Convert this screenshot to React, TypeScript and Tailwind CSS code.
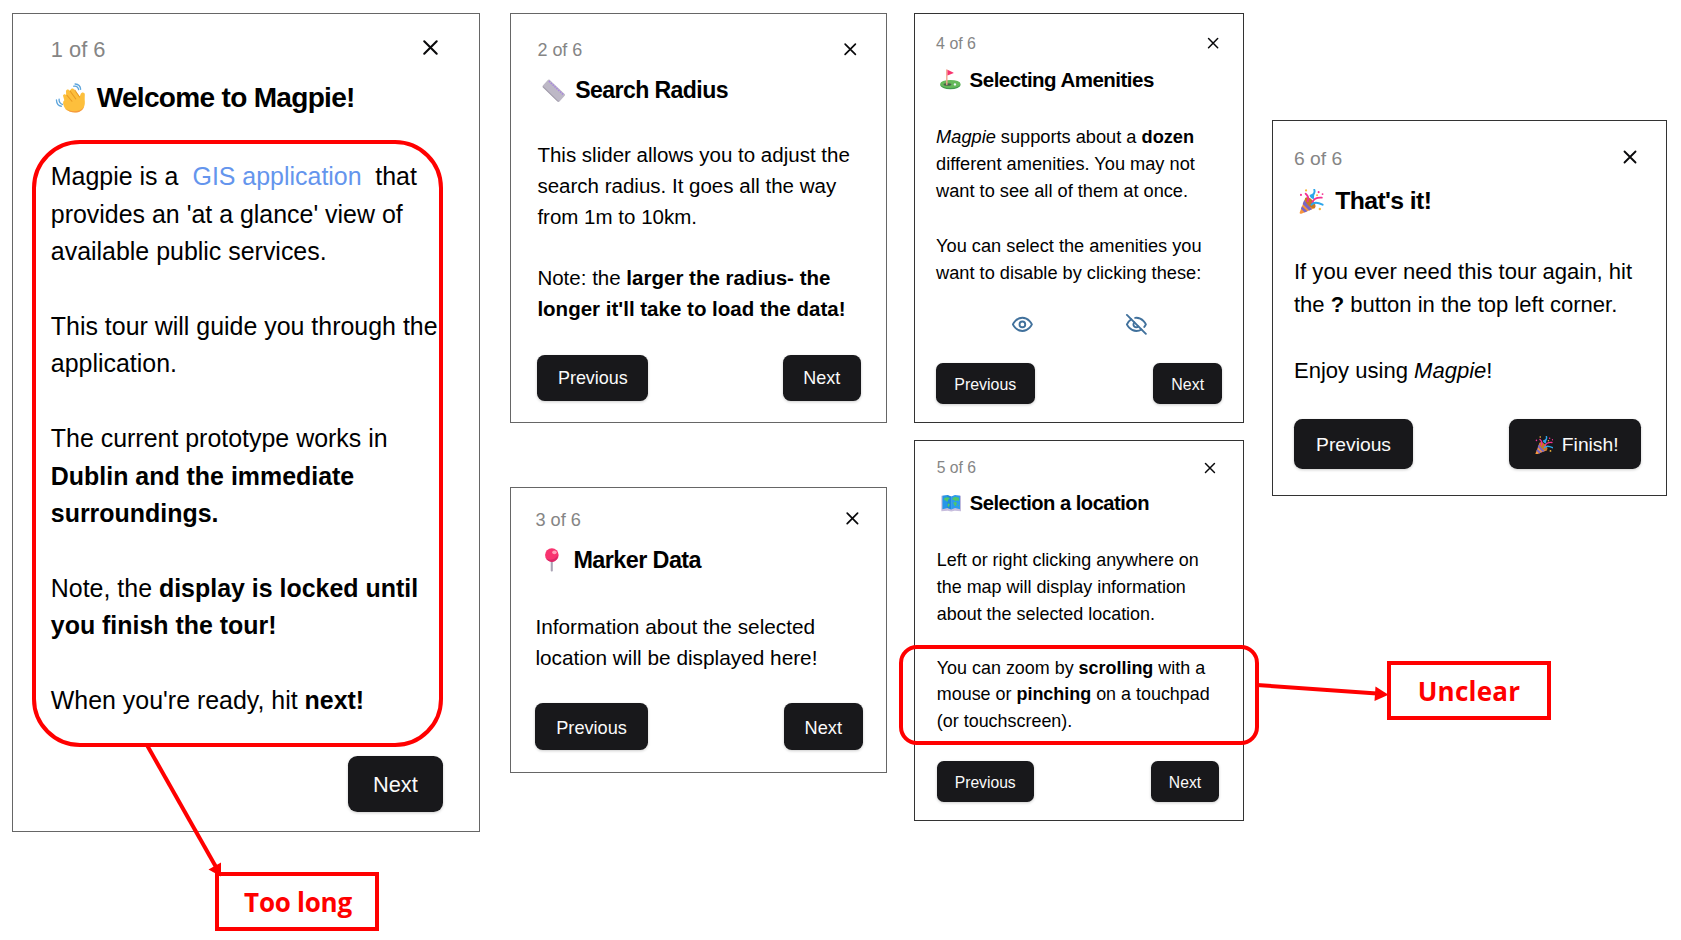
import React from "react";

function CloseIcon() {
  return (
    <svg className="mt-[-0.12em] mr-[-0.015em] size-[1em]" viewBox="0 0 24 24" fill="none" stroke="#09090b" strokeWidth="2" strokeLinecap="round">
      <path d="M18 6 6 18M6 6l12 12" />
    </svg>
  );
}

function Wave() {
  return (
    <svg className="size-full overflow-visible" viewBox="0 0 32 32" fill="none">
      <g transform="translate(-1.300 -1) scale(1.180 1.050)">
        <path d="M10.200 27.500C8 24.500 7 20 9 18.300L7.800 13.500c.2-2 2.400-2.200 3-.4l-.2-4.300c.2-2.300 2.700-2.500 3.300-.5l1-.9c.4-2.200 3-2.300 3.500-.2l5.400 7.200.8-2.700c.7-2.500 4.200-2.200 4 .7-.1 2.300-.2 4.500 0 7.500.4 6.500-3.500 11-9 11.300-4 .2-7.500-1-10-3.700Z" fill="#FDBF3C" />
        <path d="m11.500 13 4.800 6.500M14.500 8.500l5.500 8.500M19 7.500l4.500 7.500" stroke="#E99A22" strokeWidth="1" strokeLinecap="round" />
        <path d="M10.500 27c4 4 13 5 17.500-2-1.500 4.500-5 6.700-8.700 6.500-4 0-7-1.500-8.800-4.500Z" fill="#F59A3E" />
      </g>
      <path d="M20 2.500c3-.5 4.800 1.200 5.500 3.900M21.500 0c3.800.2 6 2.500 6.200 6M3.500 17c-.3 3 1.200 5 3.700 6M.5 18c.2 4 2 6.500 5.500 7" stroke="#5DA5DC" strokeWidth="1.500" strokeLinecap="round" />
    </svg>
  );
}

function Ruler() {
  return (
    <svg className="size-full" viewBox="0 0 32 32" fill="none">
      <path d="M1.500 8.500 8 1.500c.8-.9 1.800-1 2.700-.1L31 20.500c.8.8.8 1.700 0 2.500l-7 7.700c-.8.8-1.800.8-2.600 0L1.500 11.500c-.9-.9-.9-2 0-3Z" fill="#BDB8C6" />
      <path d="m1.500 9.500 20.300 19.800c.8.8 1.400.6 2 0l-.6 1.200c-.8.8-1.600.8-2.400 0L1.300 11.700c-.8-.8-.4-1.500.2-2.200Z" fill="#A5A0AE" />
      <path d="m9.500 2.800 20 18.800" stroke="#A986DF" strokeWidth="2.200" strokeDasharray="2 1.500" />
    </svg>
  );
}

function Pin() {
  return (
    <svg className="size-full" viewBox="0 0 32 32" fill="none">
      <path d="M14.500 17h2.800v13.300c0 1.700-2.800 1.700-2.800 0Z" fill="#A9A3B5" />
      <circle cx="16" cy="9.500" r="9.200" fill="#F8336F" />
      <path d="M8 14c4 3.500 12 2.500 16-4.200.3 5.200-3.500 9-8 9-3.500 0-6.500-1.800-8-4.800Z" fill="#DA2868" />
      <ellipse cx="19.500" cy="5.800" rx="3" ry="2.500" fill="#FF9FB8" />
    </svg>
  );
}

function Golf() {
  return (
    <svg className="size-full" viewBox="0 0 32 32" fill="none">
      <ellipse cx="16" cy="24.800" rx="15.700" ry="6.500" fill="#419A4D" />
      <ellipse cx="16" cy="23" rx="15.700" ry="6.200" fill="#65B95A" />
      <ellipse cx="11.500" cy="23.800" rx="6" ry="2" fill="#4A614A" />
      <circle cx="23" cy="23.800" r="1.800" fill="#EEF5F7" />
      <path d="M10.500 1.500v22.500" stroke="#EFA68D" strokeWidth="2.200" strokeLinecap="round" />
      <path d="m11.500 1 8.800 4.300c.8.400.8 1 0 1.400L11.500 10Z" fill="#F8336F" />
    </svg>
  );
}

function WorldMap() {
  return (
    <svg className="size-full" viewBox="0 0 32 32" fill="none">
      <path d="m.5 4.500 10-.5L16 5.500 21 4l10.500.5V28.500l-10-.7-5.500 1-5.500-1-10 .7Z" fill="#C7BDDD" />
      <path d="M2.200 4.500 10 3l6 2.500V26l-6-2.500-7.800 1.800Z" fill="#2596E8" />
      <path d="M16 5.500 22 3l7.800 1.500v20.800L22 23.500 16 26Z" fill="#2C9BEF" />
      <path d="M10 3l6 2.500V26l-6-2.500Z" fill="#1679CD" opacity=".45" />
      <path d="m5 8 5-1.500 4 1.500-3 3-1 3-2-2-3-1Zm6 8 3 1.500-2 5-2-3ZM18 8l4-2 6 1.500v5l-3-1-2 2-2-2-3-1Zm1 7 4-1 2 2-2 5-2-2Zm7 4 2-1v3Z" fill="#4FC66C" />
    </svg>
  );
}

function Party() {
  return (
    <svg className="size-full" viewBox="0 0 32 32" fill="none">
      <path d="m8 11.500 12.500 12.800L3 31.500c-1.500.6-2.500-.5-2-2Z" fill="#F8953B" />
      <path d="m6.700 14 9.800 11.800-3.500 1.500L4.700 19Zm-3 8 7 6.300-3.500 1.500-4.700-4.500Z" fill="#7966C4" />
      <ellipse cx="14.300" cy="17.500" rx="4.200" ry="8.800" transform="rotate(-44 14.300 17.500)" fill="#C77722" />
      <path d="M8.500 6c3 2.500 4 6 2.500 9.500M17 17c1.500-4 6-6.500 12-6" stroke="#F43192" strokeWidth="2.400" strokeLinecap="round" />
      <path d="M19.500 1c1.500 4-1 5-2.500 7.500M16 20c3-3.500 7-3.500 14 0" stroke="#2DA6EA" strokeWidth="2.500" strokeLinecap="round" />
      <path d="m19.500 5-6 2.800c0 3 2.500 5 5.500 5Z" fill="#2DA6EA" />
      <g fill="#F43192"><circle cx="2.500" cy="7.500" r="1.300" /><circle cx="25" cy="4" r="1.300" /><circle cx="30" cy="6.500" r="1.200" /></g>
      <g fill="#F6B73C"><circle cx="9" cy="1.800" r="1.400" /><circle cx="23" cy="8" r="1.300" /><circle cx="26.500" cy="25.500" r="1.500" /></g>
    </svg>
  );
}

function Eye() {
  return (
    <svg className="size-[1.25em]" viewBox="0 0 24 24" fill="none" stroke="#41719c" strokeWidth="2" strokeLinecap="round" strokeLinejoin="round">
      <path d="M2 12s3-7 10-7 10 7 10 7-3 7-10 7-10-7-10-7Z" />
      <circle cx="12" cy="12" r="3" />
    </svg>
  );
}

function EyeOff() {
  return (
    <svg className="size-[1.25em]" viewBox="0 0 24 24" fill="none" stroke="#41719c" strokeWidth="2" strokeLinecap="round" strokeLinejoin="round">
      <path d="M9.880 9.880a3 3 0 1 0 4.240 4.240" />
      <path d="M10.730 5.080A10.430 10.430 0 0 1 12 5c7 0 10 7 10 7a13.160 13.160 0 0 1-1.670 2.680" />
      <path d="M6.610 6.610A13.526 13.526 0 0 0 2 12s3 7 10 7a9.740 9.740 0 0 0 5.390-1.610" />
      <path d="m2 2 20 20" />
    </svg>
  );
}

function Button({ children }: { children: React.ReactNode }) {
  return (
    <button className="rounded-[0.375em] bg-[#18181b] shadow-[0_1px_3px_rgba(0,0,0,0.2)]">
      <span className="flex h-[2.571em] items-center px-[1.143em] pt-[0.11em] text-[0.875em] leading-none text-[#fafafa]">{children}</span>
    </button>
  );
}

type CardProps = {
  step: number;
  emoji: React.ReactNode;
  title: string;
  className: string;
  slot: string;
  finish?: boolean;
  extra?: React.ReactNode;
  children: React.ReactNode;
};

function TourCard({ step, emoji, title, className, slot, finish, extra, children }: CardProps) {
  return (
    <section className={`shrink-0 border bg-white text-black ${className}`}>
      <div className="flex h-[1.25em] items-center justify-between">
        <span className="text-[0.875em] leading-[1.429] text-[#858585]">{step} of 6</span>
        <CloseIcon />
      </div>
      <div className="mt-[0.443em] flex h-[1.75em] items-center">
        <span className={`shrink-0 pl-[0.22em] ${slot}`}>
          <span className="block size-[1.14em]">{emoji}</span>
        </span>
        <h2 className="text-[1.125em] leading-[1.556] font-bold tracking-tight whitespace-nowrap">{title}</h2>
      </div>
      <div className="mt-[1.55em] leading-[1.5] whitespace-nowrap">{children}</div>
      {extra}
      <div className={`mt-[1.46em] flex ${step === 1 ? "justify-end" : "justify-between"}`}>
        {step > 1 && <Button>Previous</Button>}
        {finish ? (
          <Button>
            <span className="mr-[0.445em] ml-[0.19em] block size-[0.97em]"><Party /></span>
            Finish!
          </Button>
        ) : (
          <Button>Next</Button>
        )}
      </div>
    </section>
  );
}

export default function App() {
  return (
    <main className="relative flex h-[940px] w-[1681px] items-start overflow-hidden bg-white pt-[13px] pl-[12px] font-['Liberation_Sans',Arial,sans-serif]">
      <TourCard
        step={1} emoji={<Wave />} title="Welcome to Magpie!" slot="w-[1.84em]"
        className="h-[819px] w-[468px] border-[#666] pt-[19.8px] pr-[36.3px] pl-[37.8px] text-[24.95px]"
      >
        <p>Magpie is a <a className="mr-[0.27em] ml-[0.29em] text-[#6495ed]">GIS application</a> that<br />provides an 'at a glance' view of<br />available public services.</p>
        <p className="mt-[1.5em]">This tour will guide you through the<br />application.</p>
        <p className="mt-[1.5em]">The current prototype works in<br /><b>Dublin and the immediate<br />surroundings.</b></p>
        <p className="mt-[1.5em]">Note, the <b>display is locked until<br />you finish the tour!</b></p>
        <p className="mt-[1.5em]">When you're ready, hit <b>next!</b></p>
      </TourCard>

      <div className="ml-[30px] flex shrink-0 flex-col gap-[64px]">
        <TourCard
          step={2} emoji={<Ruler />} title="Search Radius" slot="w-[1.84em]"
          className="h-[410px] w-[377px] border-[#666] pt-[23.8px] pr-[25.3px] pl-[26.4px] text-[20.53px]"
        >
          <p>This slider allows you to adjust the<br />search radius. It goes all the way<br />from 1m to 10km.</p>
          <p className="mt-[1.5em]">Note: the <b>larger the radius- the<br />longer it'll take to load the data!</b></p>
        </TourCard>
        <TourCard
          step={3} emoji={<Pin />} title="Marker Data" slot="w-[1.83em]"
          className="h-[286px] w-[377px] border-[#666] pt-[18.9px] pr-[23.2px] pl-[24.4px] text-[20.8px]"
        >
          <p>Information about the selected<br />location will be displayed here!</p>
        </TourCard>
      </div>

      <div className="ml-[27px] flex shrink-0 flex-col gap-[17px]">
        <TourCard
          step={4} emoji={<Golf />} title="Selecting Amenities" slot="w-[1.84em]"
          className="h-[410px] w-[330px] border-[#333] pt-[18.7px] pr-[20.7px] pl-[21.1px] text-[18.22px]"
          extra={
            <div className="mt-[1.31em] flex h-[1.39em] items-center justify-center gap-[5em]">
              <Eye />
              <EyeOff />
            </div>
          }
        >
          <p><i>Magpie</i> supports about a <b>dozen</b><br />different amenities. You may not<br />want to see all of them at once.</p>
          <p className="mt-[1.5em]">You can select the amenities you<br />want to disable by clicking these:</p>
        </TourCard>
        <TourCard
          step={5} emoji={<WorldMap />} title="Selection a location" slot="w-[1.84em]"
          className="h-[381px] w-[330px] border-[#333] pt-[16.4px] pr-[24px] pl-[21.8px] text-[17.93px]"
        >
          <p>Left or right clicking anywhere on<br />the map will display information<br />about the selected location.</p>
          <p className="mt-[1.5em]">You can zoom by <b>scrolling</b> with a<br />mouse or <b>pinching</b> on a touchpad<br />(or touchscreen).</p>
        </TourCard>
      </div>

      <TourCard
        step={6} emoji={<Party />} title="That's it!" slot="w-[1.87em]" finish
        className="mt-[107px] ml-[28px] h-[376px] w-[395px] border-[#333] pt-[23.7px] pr-[25.4px] pl-[21px] text-[22.04px]"
      >
        <p>If you ever need this tour again, hit<br />the <b>?</b> button in the top left corner.</p>
        <p className="mt-[1.5em]">Enjoy using <i>Magpie</i>!</p>
      </TourCard>

      <div className="absolute top-[140px] left-[32px] h-[607px] w-[411px] rounded-[48px] border-4 border-[#ff0000]" />
      <div className="absolute top-[645px] left-[899px] h-[100px] w-[360px] rounded-[18px] border-4 border-[#ff0000]" />
      <svg className="absolute inset-0 h-[940px] w-[1681px]" fill="#f00" stroke="none">
        <path d="M147.500 746 216 867" stroke="#f00" strokeWidth="4" />
        <path d="m208.500 869.500 12.500-7v14Z" />
        <path d="M1257 685 1377 693.500" stroke="#f00" strokeWidth="4" />
        <path d="m1375.500 686.500-1 14.500 14-6.200Z" />
      </svg>
      <div className="absolute top-[872px] left-[215px] flex h-[59px] w-[164px] items-center justify-center border-4 border-[#ff0000] pl-[2px] font-['Open_Sans',sans-serif] text-[26px] leading-none font-bold tracking-[-0.25px] whitespace-nowrap text-[#ff0000]">
        Too long
      </div>
      <div className="absolute top-[661px] left-[1387px] flex h-[59px] w-[164px] items-center justify-center border-4 border-[#ff0000] font-['Open_Sans',sans-serif] text-[26px] leading-none font-bold tracking-[0.25px] whitespace-nowrap text-[#ff0000]">
        Unclear
      </div>
    </main>
  );
}
